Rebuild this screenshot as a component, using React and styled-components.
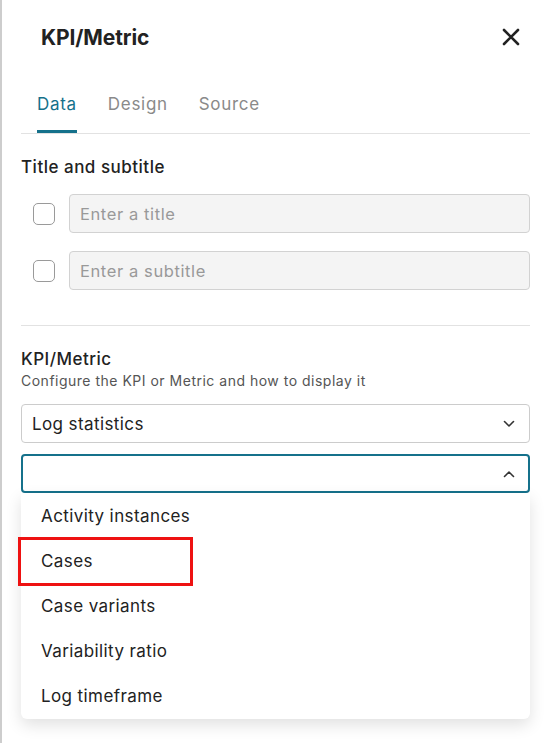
import styled, { createGlobalStyle } from "styled-components";

const GlobalStyle = createGlobalStyle`
  html, body {
    margin: 0;
    padding: 0;
    background: #ffffff;
  }
  body {
    font-family: Inter, "Noto Sans", "Liberation Sans", sans-serif;
    color: #222222;
    letter-spacing: 0.4px;
  }
  * {
    box-sizing: border-box;
  }
`;

const teal = "#15718b";

function Chevron({ up }) {
  return (
    <svg width="12" height="8" viewBox="0 0 12 8" fill="none">
      <path
        d={up ? "M1.5 6.5 L6 2 L10.5 6.5" : "M1.5 1.5 L6 6 L10.5 1.5"}
        stroke="#333"
        strokeWidth="1.6"
        strokeLinecap="round"
        strokeLinejoin="round"
      />
    </svg>
  );
}

function CloseIcon() {
  return (
    <svg width="18" height="18" viewBox="0 0 18 18">
      <path d="M2 2 L16 16 M16 2 L2 16" stroke="#222" strokeWidth="2.6" strokeLinecap="round" />
    </svg>
  );
}

const options = ["Activity instances", "Cases", "Case variants", "Variability ratio", "Log timeframe"];

function App() {
  return (
    <>
      <GlobalStyle />
      <Panel>
        <Header>
          <Titulo>KPI/Metric</Titulo>
          <CloseButton>
            <CloseIcon />
          </CloseButton>
        </Header>

        <Tabs>
          <Tab active>Data</Tab>
          <Tab>Design</Tab>
          <Tab>Source</Tab>
        </Tabs>

        <Section>
          <SectionTitle>Title and subtitle</SectionTitle>
          <Rows>
            <InputRow>
              <Checkbox />
              <TextBox>Enter a title</TextBox>
            </InputRow>
            <InputRow>
              <Checkbox />
              <TextBox>Enter a subtitle</TextBox>
            </InputRow>
          </Rows>
        </Section>

        <Divider />

        <Section>
          <SectionTitle>KPI/Metric</SectionTitle>
          <Descricao>Configure the KPI or Metric and how to display it</Descricao>
          <Selects>
            <Select>
              <span>Log statistics</span>
              <Chevron />
            </Select>
            <SelectWrap>
              <Select open>
                <span />
                <Chevron up />
              </Select>
              <Menu>
                {options.map((o) => (
                  <MenuItem key={o} marked={o === "Cases"}>
                    {o}
                  </MenuItem>
                ))}
              </Menu>
            </SelectWrap>
          </Selects>
        </Section>
      </Panel>
    </>
  );
}

const Panel = styled.div`
  border-left: 2px solid #cdcdcd;
  min-height: 743px;
  padding: 0 19px;
`;

const Header = styled.div`
  align-items: center;
  display: flex;
  height: 74px;
  justify-content: space-between;
  padding: 0 10px 0 20px;
`;

const Titulo = styled.h1`
  font-size: 21px;
  font-weight: 700;
  letter-spacing: -0.1px;
  margin: 0;
`;

const CloseButton = styled.div`
  display: flex;
  height: 18px;
  width: 18px;
`;

const Tabs = styled.div`
  border-bottom: 1px solid #e2e2e2;
  display: flex;
  gap: 31px;
  height: 60px;
  padding-left: 16px;
`;

const Tab = styled.div`
  border-bottom: 3px solid ${(p) => (p.active ? teal : "transparent")};
  border-radius: 2px 2px 0 0;
  color: ${(p) => (p.active ? teal : "#8a8a8a")};
  font-size: 17px;
  letter-spacing: 0.7px;
  line-height: 22px;
  padding-top: 19px;
`;

const Section = styled.div`
  display: flex;
  flex-direction: column;
`;

const SectionTitle = styled.h3`
  font-size: 17px;
  font-weight: 500;
  letter-spacing: 0.5px;
  line-height: 22px;
  margin: 22px 0 0 0;
`;

const Rows = styled.div`
  display: flex;
  flex-direction: column;
  gap: 18px;
  margin-top: 16px;
  padding-left: 12px;
`;

const InputRow = styled.div`
  align-items: center;
  display: flex;
  gap: 14px;
`;

const Checkbox = styled.div`
  border: 1.5px solid #9a9a9a;
  border-radius: 5px;
  flex-shrink: 0;
  height: 22px;
  width: 22px;
`;

const TextBox = styled.div`
  align-items: center;
  background: #f4f4f4;
  border: 1px solid #d2d2d2;
  border-radius: 4px;
  color: #999999;
  display: flex;
  flex: 1;
  font-size: 16.5px;
  height: 39px;
  letter-spacing: 0.6px;
  padding-left: 10px;
`;

const Divider = styled.div`
  background: #e2e2e2;
  height: 1px;
  margin-top: 35px;
`;

const Descricao = styled.p`
  color: #555555;
  font-size: 14px;
  letter-spacing: 0.5px;
  line-height: 18px;
  margin: 2px 0 0 0;
`;

const Selects = styled.div`
  display: flex;
  flex-direction: column;
  gap: 11px;
  margin-top: 14px;
`;

const SelectWrap = styled.div`
  display: flex;
  flex-direction: column;
`;

const Select = styled.div`
  align-items: center;
  border: ${(p) => (p.open ? `2px solid ${teal}` : "1px solid #cccccc")};
  border-radius: 4px;
  display: flex;
  font-size: 17px;
  height: 39px;
  justify-content: space-between;
  padding: 0 ${(p) => (p.open ? "13px" : "14px")} 0 ${(p) => (p.open ? "9px" : "10px")};
`;

const Menu = styled.div`
  background: #ffffff;
  border-radius: 0 0 6px 6px;
  box-shadow: 0 6px 16px rgba(0, 0, 0, 0.12);
  display: flex;
  flex-direction: column;
  height: 226px;
`;

const MenuItem = styled.div`
  align-items: center;
  display: flex;
  font-size: 17px;
  height: 45px;
  padding-left: 20px;
  position: relative;

  &::after {
    border: 3px solid #ee1111;
    bottom: -3px;
    content: "";
    display: ${(p) => (p.marked ? "block" : "none")};
    left: -3px;
    position: absolute;
    top: -1px;
    width: 169px;
  }
`;

export default App;
